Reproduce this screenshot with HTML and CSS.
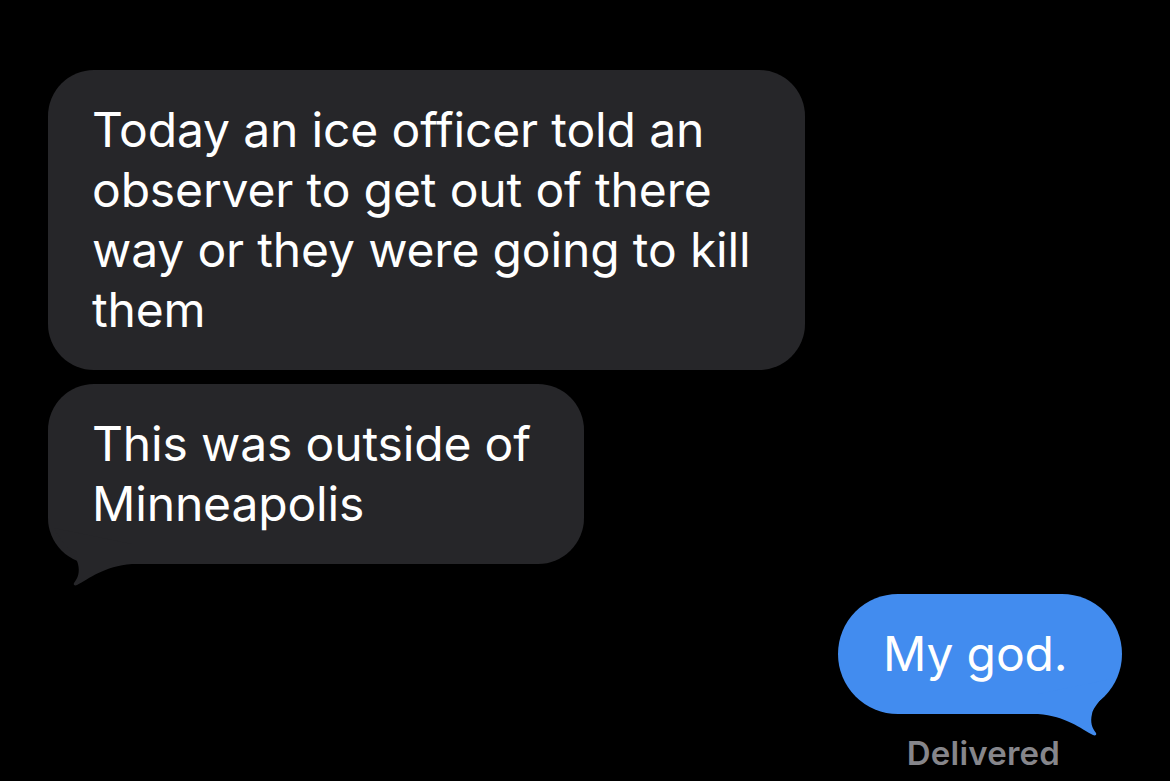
FILE: index.html
```html
<!DOCTYPE html>
<html lang="en">
<head>
<meta charset="utf-8">
<title>Messages</title>
<link rel="stylesheet" href="styles.css">
</head>
<body>
<main class="thread">
  <div class="bubble incoming wide">Today an ice officer told an observer to get out of there way or they were going to kill them</div>
  <div class="bubble incoming narrow with-tail">This was outside of Minneapolis
    <svg class="tail tail-left" viewBox="0 0 90 60" width="90" height="60" aria-hidden="true"><path d="M6 16 L84 0 C76 16 62 26 60 36 C58 44 60 50 64 55 C65 57 63 58 61 57 C49 51 34 38 6 36 Z"/></svg>
  </div>
  <div class="bubble outgoing with-tail">My god.
    <svg class="tail tail-right" viewBox="0 0 90 60" width="90" height="60" aria-hidden="true"><path d="M6 16 L84 0 C76 16 62 26 60 36 C58 44 60 50 64 55 C65 57 63 58 61 57 C49 51 34 38 6 36 Z"/></svg>
  </div>
  <div class="status">Delivered</div>
</main>
</body>
</html>
```
FILE: styles.css
```css
html, body {
  margin: 0;
  padding: 0;
  background: #000;
}

.thread {
  display: flex;
  flex-direction: column;
  align-items: flex-start;
  padding: 70px 48px 0 48px;
  font-family: "Inter", "Roboto", "Liberation Sans", sans-serif;
}

.bubble {
  position: relative;
  box-sizing: border-box;
  padding: 30px 40px 30px 44px;
  font-size: 48px;
  line-height: 60px;
  color: #fff;
  border-radius: 46px;
  letter-spacing: -0.15px;
}

.wide {
  width: 757px;
}

.narrow {
  width: 536px;
}

.incoming {
  background: #262629;
  fill: #262629;
}

.incoming + .incoming {
  margin-top: 14px;
}

.outgoing {
  align-self: flex-end;
  width: 284px;
  margin-top: 30px;
  padding-left: 45px;
  padding-right: 40px;
  background: #428cef;
  fill: #428cef;
  border-radius: 60px;
}

.tail {
  position: absolute;
  bottom: -24px;
}

.tail-right {
  right: 0;
}

.tail-left {
  left: 0;
  transform: scaleX(-1);
}

.status {
  align-self: flex-end;
  margin: 19px 62px 0 0;
  font-size: 33px;
  line-height: 40px;
  font-weight: 600;
  letter-spacing: 0.2px;
  color: #86868b;
}
```
